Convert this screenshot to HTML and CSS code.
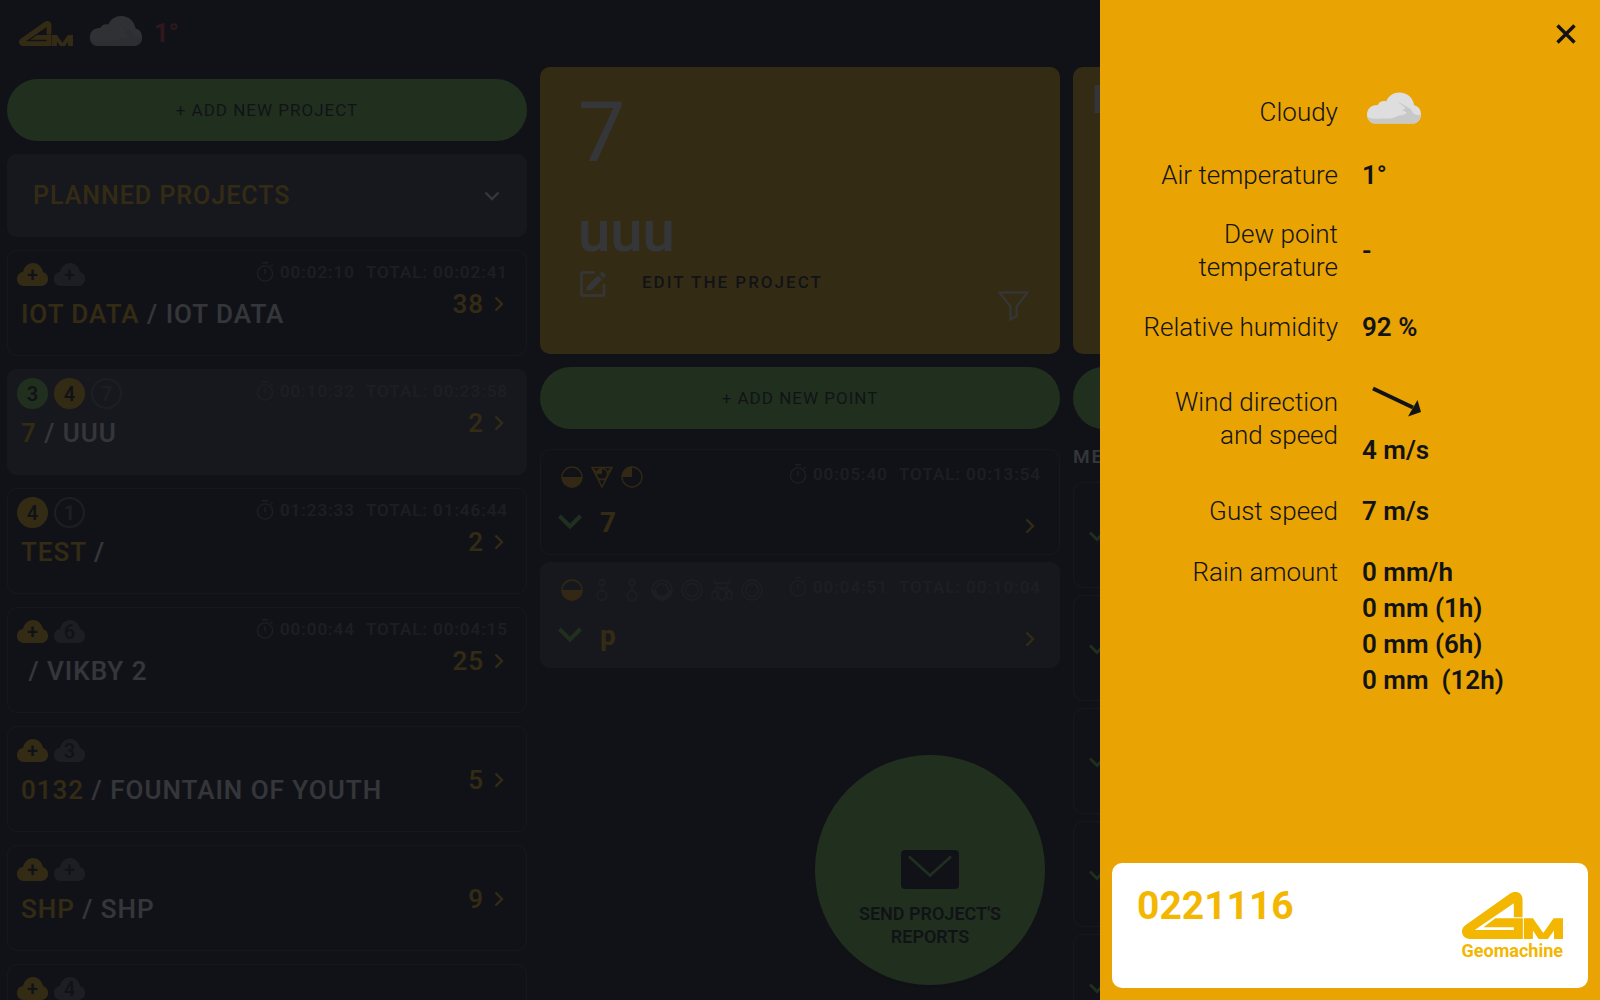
FILE: index.html
```html
<!DOCTYPE html>
<html lang="en">
<head>
    <meta charset="UTF-8">
    <meta name="viewport" content="width=device-width, initial-scale=1.0">
    <title>Geomachine</title>
    <link rel="stylesheet" href="styles.css">
</head>
<body>
    <!-- Shared icons -->
    <svg class="sprite" aria-hidden="true">
        <symbol id="logo" viewBox="0 0 302 140">
            <path d="M155 75H181V23C181 7 171 0 160 0C153 0 148 2 143 5L12 98C4 104 0 110 0 118C0 131 10 140 24 140H182V78H100L64 105H155V113H38L155 33Z"/>
            <path d="M185 78H212L243 122L274 78H302V140H275V115L257 140H229L212 115V140H185Z"/>
        </symbol>
        <symbol id="weather" viewBox="0 0 160 92">
            <path fill="#dedede" d="M26 92C10 92 0 80 0 65C0 48 13 36 32 37C36 27 46 23 57 26C64 9 79 0 96 0C119 0 136 15 140 38C153 41 160 52 160 65C160 80 150 92 134 92Z"/>
            <path fill="#c8c8c8" d="M26 92C12 92 4 84 1 73C14 80 28 78 44 77C62 78 80 78 91 70C96 66 112 68 118 60C114 55 106 56 104 51C116 50 114 46 110 42C102 36 98 34 92 30C106 32 114 42 124 46C134 50 132 58 138 62C146 66 152 68 160 66C160 80 150 92 134 92Z"/>
        </symbol>
        <symbol id="badge-cloud" viewBox="0 0 31 23">
            <path d="M7 23C3 23 0 20 0 16C0 12 3 9 6 9C7 4 11 0 16 0C21 0 25 4 26 9C29 10 31 12 31 16C31 20 28 23 24 23Z"/>
        </symbol>
        <symbol id="timer" viewBox="0 0 18 20">
            <g fill="none" stroke="currentColor" stroke-width="1.4">
                <circle cx="9" cy="11.500" r="7.600"/>
                <path d="M6 .8H12M9 7V12M14.500 4.500L16.500 3"/>
            </g>
        </symbol>
        <symbol id="chevron-right" viewBox="0 0 10 16">
            <path d="M1.500 1.500L8 8L1.500 14.500" fill="none" stroke="currentColor" stroke-width="2.200"/>
        </symbol>
        <symbol id="check" viewBox="0 0 24 16">
            <path d="M1.500 2L12 12.500L22.500 2" fill="none" stroke="currentColor" stroke-width="4"/>
        </symbol>
        <symbol id="half" viewBox="0 0 22 22">
            <circle cx="11" cy="11" r="10" fill="none" stroke="currentColor" stroke-width="1.300"/>
            <path d="M.5 11H21.500A10.500 10.500 0 0 1 .5 11Z" fill="currentColor"/>
        </symbol>
        <symbol id="quarter" viewBox="0 0 22 22">
            <circle cx="11" cy="11" r="10" fill="none" stroke="currentColor" stroke-width="1.300"/>
            <path d="M11 .5V11H.5A10.500 10.500 0 0 1 11 .5Z" fill="currentColor"/>
        </symbol>
        <symbol id="triangle" viewBox="0 0 22 22">
            <path d="M1 1.500H21L11 21ZM7 13.500H15M1 1.500L6 7M21 1.500L16 7" fill="none" stroke="currentColor" stroke-width="1.500"/>
            <circle cx="11" cy="8" r="5.500" fill="none" stroke="currentColor" stroke-width="1.300"/>
            <path d="M11 2V8H5A6 6 0 0 1 11 2Z" fill="currentColor"/>
        </symbol>
        <symbol id="chain" viewBox="0 0 22 22">
            <g fill="none" stroke="currentColor" stroke-width="1.400">
                <circle cx="11" cy="3.500" r="2.800"/>
                <circle cx="11" cy="16.500" r="4.800"/>
                <path d="M11 6.500V11.500"/>
            </g>
        </symbol>
        <symbol id="ring" viewBox="0 0 22 22">
            <g fill="none" stroke="currentColor" stroke-width="1.400">
                <circle cx="11" cy="11" r="10"/>
                <circle cx="11" cy="11" r="6.500"/>
            </g>
        </symbol>
        <symbol id="ring-half" viewBox="0 0 22 22">
            <g fill="none" stroke="currentColor" stroke-width="1.400">
                <circle cx="11" cy="11" r="10"/>
                <circle cx="11" cy="11" r="6.500"/>
                <path d="M2.700 11A8.300 8.300 0 0 0 19.300 11" stroke-width="4"/>
            </g>
        </symbol>
        <symbol id="machine" viewBox="0 0 22 22">
            <g fill="none" stroke="currentColor" stroke-width="1.400">
                <path d="M3.500 0V4H18.500V0M6 4V9H16V4M6 9L2 14M16 9L20 14"/>
                <rect x="7.500" y="10" width="7" height="11" rx="3.500"/>
                <rect x="1" y="12" width="5" height="8" rx="2"/>
                <rect x="16" y="12" width="5" height="8" rx="2"/>
            </g>
        </symbol>
    </svg>

    <header class="topbar">
        <svg class="topbar-logo"><use href="#logo"/></svg>
        <svg class="topbar-weather"><use href="#weather"/></svg>
        <span class="topbar-temp">1°</span>
    </header>

    <main class="columns">
        <section class="column projects">
            <button class="add-button" type="button">+ Add new project</button>
            <div class="filter-box">
                <select class="filter-select" aria-label="Project filter">
                    <option>PLANNED PROJECTS</option>
                </select>
                <svg class="filter-arrow" viewBox="0 0 16 10"><path d="M1.500 1.500L8 8L14.500 1.500" fill="none" stroke="currentColor" stroke-width="2.400"/></svg>
            </div>
            <a class="project" href="#">
                <div class="project-info">
                    <div class="badges">
                        <span class="badge cloud yellow"><svg><use href="#badge-cloud"/></svg><b>+</b></span>
                        <span class="badge cloud grey"><svg><use href="#badge-cloud"/></svg><b>+</b></span>
                    </div>
                    <div class="project-title"><span>IOT DATA</span> / IOT DATA</div>
                </div>
                <div class="project-side">
                    <div class="times"><svg><use href="#timer"/></svg><span>00:02:10</span><span>TOTAL: 00:02:41</span></div>
                    <div class="count">38 <svg><use href="#chevron-right"/></svg></div>
                </div>
            </a>
            <a class="project active" href="#">
                <div class="project-info">
                    <div class="badges">
                        <span class="badge green"><b>3</b></span>
                        <span class="badge yellow"><b>4</b></span>
                        <span class="badge outline"><b>7</b></span>
                    </div>
                    <div class="project-title"><span>7</span> / UUU</div>
                </div>
                <div class="project-side">
                    <div class="times"><svg><use href="#timer"/></svg><span>00:10:32</span><span>TOTAL: 00:23:58</span></div>
                    <div class="count">2 <svg><use href="#chevron-right"/></svg></div>
                </div>
            </a>
            <a class="project" href="#">
                <div class="project-info">
                    <div class="badges">
                        <span class="badge yellow"><b>4</b></span>
                        <span class="badge outline"><b>1</b></span>
                    </div>
                    <div class="project-title"><span>TEST</span> /</div>
                </div>
                <div class="project-side">
                    <div class="times"><svg><use href="#timer"/></svg><span>01:23:33</span><span>TOTAL: 01:46:44</span></div>
                    <div class="count">2 <svg><use href="#chevron-right"/></svg></div>
                </div>
            </a>
            <a class="project" href="#">
                <div class="project-info">
                    <div class="badges">
                        <span class="badge cloud yellow"><svg><use href="#badge-cloud"/></svg><b>+</b></span>
                        <span class="badge cloud grey"><svg><use href="#badge-cloud"/></svg><b>6</b></span>
                    </div>
                    <div class="project-title">&nbsp;/ VIKBY 2</div>
                </div>
                <div class="project-side">
                    <div class="times"><svg><use href="#timer"/></svg><span>00:00:44</span><span>TOTAL: 00:04:15</span></div>
                    <div class="count">25 <svg><use href="#chevron-right"/></svg></div>
                </div>
            </a>
            <a class="project" href="#">
                <div class="project-info">
                    <div class="badges">
                        <span class="badge cloud yellow"><svg><use href="#badge-cloud"/></svg><b>+</b></span>
                        <span class="badge cloud grey"><svg><use href="#badge-cloud"/></svg><b>3</b></span>
                    </div>
                    <div class="project-title"><span>0132</span> / FOUNTAIN OF YOUTH</div>
                </div>
                <div class="project-side no-times">
                    <div class="count">5 <svg><use href="#chevron-right"/></svg></div>
                </div>
            </a>
            <a class="project" href="#">
                <div class="project-info">
                    <div class="badges">
                        <span class="badge cloud yellow"><svg><use href="#badge-cloud"/></svg><b>+</b></span>
                        <span class="badge cloud grey"><svg><use href="#badge-cloud"/></svg><b>+</b></span>
                    </div>
                    <div class="project-title"><span>SHP</span> / SHP</div>
                </div>
                <div class="project-side no-times">
                    <div class="count">9 <svg><use href="#chevron-right"/></svg></div>
                </div>
            </a>
            <a class="project" href="#">
                <div class="project-info">
                    <div class="badges">
                        <span class="badge cloud yellow"><svg><use href="#badge-cloud"/></svg><b>+</b></span>
                        <span class="badge cloud grey"><svg><use href="#badge-cloud"/></svg><b>4</b></span>
                    </div>
                </div>
            </a>
        </section>

        <section class="column points">
            <div class="hero">
                <h1 class="hero-number">7</h1>
                <h2 class="hero-name">uuu</h2>
                <div class="hero-actions">
                    <button class="edit-button" type="button">
                        <svg viewBox="0 0 26 26"><path d="M15 1.500H2.500A1 1 0 0 0 1.500 2.500V23.500A1 1 0 0 0 2.500 24.500H23A1 1 0 0 0 24 23.500V13" fill="none" stroke="currentColor" stroke-width="2.400"/><path d="M18 4.500L22 8.500L11.500 19L6.500 19.500L7 15.500ZM19.500 3L22 .5L26 4.500L23.500 7Z" fill="currentColor"/></svg>
                        <span>Edit the project</span>
                    </button>
                    <button class="funnel-button" type="button" aria-label="Filter">
                        <svg viewBox="0 0 31 30"><path d="M1.500 1.500H29.500L18.500 15.500V25L12.500 28.500V15.500Z" fill="none" stroke="currentColor" stroke-width="2"/></svg>
                    </button>
                </div>
            </div>
            <button class="add-button" type="button">+ Add new point</button>
            <div class="point-list">
                <a class="point" href="#">
                    <div class="point-top">
                        <div class="point-icons yellow-icons">
                            <svg><use href="#half"/></svg>
                            <svg><use href="#triangle"/></svg>
                            <svg><use href="#quarter"/></svg>
                        </div>
                        <div class="times"><svg><use href="#timer"/></svg><span>00:05:40</span><span>TOTAL: 00:13:54</span></div>
                    </div>
                    <div class="point-bottom">
                        <svg class="check"><use href="#check"/></svg>
                        <span class="point-name">7</span>
                        <svg class="arrow"><use href="#chevron-right"/></svg>
                    </div>
                </a>
                <a class="point active" href="#">
                    <div class="point-top">
                        <div class="point-icons">
                            <svg class="started"><use href="#half"/></svg>
                            <svg><use href="#chain"/></svg>
                            <svg><use href="#chain"/></svg>
                            <svg><use href="#ring-half"/></svg>
                            <svg><use href="#ring"/></svg>
                            <svg><use href="#machine"/></svg>
                            <svg><use href="#ring"/></svg>
                        </div>
                        <div class="times"><svg><use href="#timer"/></svg><span>00:04:51</span><span>TOTAL: 00:10:04</span></div>
                    </div>
                    <div class="point-bottom">
                        <svg class="check"><use href="#check"/></svg>
                        <span class="point-name">p</span>
                        <svg class="arrow"><use href="#chevron-right"/></svg>
                    </div>
                </a>
            </div>
            <button class="send-button" type="button">
                <svg viewBox="0 0 58 39"><rect width="58" height="39" rx="4" fill="#121317"/><path d="M8 6.500L29 25.500L50 6.500" fill="none" stroke="#72d148" stroke-width="2.600"/></svg>
                Send project's<br>reports
            </button>
        </section>

        <section class="column methods">
            <div class="hero"><h2 class="hero-point">p</h2></div>
            <button class="add-button" type="button" aria-label="Add"></button>
            <h3 class="methods-title">METHODS</h3>
            <div class="point-list">
                <div class="method"><svg><use href="#check"/></svg></div>
                <div class="method"><svg><use href="#check"/></svg></div>
                <div class="method"><svg><use href="#check"/></svg></div>
                <div class="method"><svg><use href="#check"/></svg></div>
                <div class="method"><svg><use href="#check"/></svg></div>
            </div>
        </section>
    </main>

    <div class="overlay"></div>

    <aside class="drawer">
        <button class="close-button" type="button" aria-label="Close">
            <svg viewBox="0 0 20 20"><path d="M1.500 1.500L18.500 18.500M18.500 1.500L1.500 18.500" stroke="currentColor" stroke-width="3.400"/></svg>
        </button>
        <dl class="weather-list">
            <div class="weather-row">
                <dt>Cloudy</dt>
                <dd><svg class="weather-icon"><use href="#weather"/></svg></dd>
            </div>
            <div class="weather-row">
                <dt>Air temperature</dt>
                <dd>1°</dd>
            </div>
            <div class="weather-row">
                <dt>Dew point temperature</dt>
                <dd>-</dd>
            </div>
            <div class="weather-row">
                <dt>Relative humidity</dt>
                <dd>92 %</dd>
            </div>
            <div class="weather-row">
                <dt>Wind direction and speed</dt>
                <dd>
                    <svg class="wind-arrow" viewBox="0 0 70 62"><path d="M11 18.500L51 37.500" stroke="currentColor" stroke-width="4"/><path d="M55.500 30L59 42L46 46.500Z" fill="currentColor"/></svg>
                    4 m/s
                </dd>
            </div>
            <div class="weather-row">
                <dt>Gust speed</dt>
                <dd>7 m/s</dd>
            </div>
            <div class="weather-row top">
                <dt>Rain amount</dt>
                <dd>0 mm/h<br>0 mm (1h)<br>0 mm (6h)<br>0 mm &nbsp;(12h)</dd>
            </div>
        </dl>
        <footer class="machine-card">
            <strong class="machine-number">0221116</strong>
            <div class="brand">
                <svg><use href="#logo"/></svg>
                <span>Geomachine</span>
            </div>
        </footer>
    </aside>
</body>
</html>
```
FILE: styles.css
```css
* {
    box-sizing: border-box;
}
body {
    font-family: Roboto, "Liberation Sans", sans-serif;
    background: #121317;
    color: #fff;
    margin: 0;
    height: 100vh;
    overflow: hidden;
}
h1, h2, h3, dl, dd {
    margin: 0;
}
button {
    font-family: inherit;
    border: none;
    padding: 0;
    cursor: pointer;
}
a {
    color: inherit;
    text-decoration: none;
}
svg {
    display: block;
    flex: none;
    fill: currentColor;
}
.sprite {
    position: absolute;
    width: 0;
    height: 0;
}

/* Top bar */
.topbar {
    display: flex;
    align-items: flex-end;
    height: 67px;
    padding: 0 19px 21px;
}
.topbar-logo {
    width: 54px;
    height: 25px;
    color: #f3b701;
}
.topbar-weather {
    width: 54px;
    height: 30px;
    margin: 0 11px 0 16px;
}
.topbar-temp {
    color: #e53935;
    font-size: 26px;
    line-height: 26px;
    font-weight: 600;
}

/* Columns */
.columns {
    display: flex;
    gap: 13px;
    padding: 0 7px;
    height: calc(100vh - 67px);
    overflow: hidden;
}
.column {
    position: relative;
    flex: none;
    width: 32.5vw;
}
.add-button {
    display: block;
    width: 100%;
    height: 62px;
    border-radius: 31px;
    background: #72d148;
    color: #121317;
    font-size: 17px;
    font-weight: 400;
    letter-spacing: 1px;
    text-transform: uppercase;
}
.projects {
    display: flex;
    flex-direction: column;
    gap: 13px;
    padding-top: 12px;
}
.projects .add-button,
.filter-box,
.project {
    flex: none;
}
.filter-box {
    display: flex;
    align-items: center;
    height: 83px;
    padding: 0 27px 0 26px;
    border-radius: 10px;
    background: #34383f;
}
.filter-select {
    flex: 1;
    appearance: none;
    border: none;
    padding: 0;
    background: none;
    color: #f3b701;
    font-family: inherit;
    font-size: 25px;
    font-weight: 500;
    letter-spacing: 1px;
}
.filter-arrow {
    width: 16px;
    height: 10px;
    fill: none;
}

/* Project cards */
.project {
    display: flex;
    height: 106px;
    padding: 8px 8px 8px 9px;
    border: 1px solid #34363c;
    border-radius: 10px;
    white-space: nowrap;
}
.project.active,
.point.active {
    background: #34383f;
    border-color: #34383f;
}
/* Long titles may run under the times, so they take no part in the row width */
.project-info {
    flex: 1;
    min-width: 0;
}
.badges {
    display: flex;
    gap: 6px;
}
.badge {
    display: grid;
    place-items: center;
    width: 31px;
    height: 31px;
    border-radius: 50%;
}
.badge > * {
    grid-area: 1 / 1;
}
.badge svg {
    width: 31px;
    height: 23px;
}
.badge b {
    color: #121317;
    font-size: 20px;
    line-height: 24px;
    font-weight: 600;
}
.badge.green {
    background: #72d148;
}
.badge.yellow {
    background: #f3b701;
}
.badge.cloud {
    background: none;
}
.badge.cloud.yellow {
    color: #f3b701;
}
.badge.cloud.grey {
    color: #5f6168;
}
.badge.outline {
    border: 2px solid #5f6168;
}
.badge.outline b {
    color: #5f6168;
}
.project-title {
    margin-top: 7px;
    padding: 0 4px;
    font-size: 26px;
    line-height: 34px;
    font-weight: 500;
    letter-spacing: 1px;
}
.project-title span {
    color: #f3b701;
}
.times {
    display: flex;
    align-items: center;
    height: 26px;
    color: #5f6168;
    font-size: 17px;
    font-weight: 500;
    letter-spacing: 1px;
    white-space: nowrap;
}
.times svg {
    width: 18px;
    height: 20px;
    margin-right: 6px;
    fill: none;
}
.times span + span {
    margin-left: 11px;
}
.project-side {
    padding-right: 10px;
}
.count {
    display: flex;
    align-items: center;
    justify-content: flex-end;
    gap: 10px;
    height: 38px;
    padding-right: 4px;
    color: #f3b701;
    font-size: 26px;
    font-weight: 500;
    letter-spacing: 1px;
}
.no-times .count {
    margin-top: 26px;
}
.count svg,
.arrow {
    width: 10px;
    height: 16px;
    fill: none;
}

/* Selected project */
.hero {
    display: flex;
    flex-direction: column;
    height: 287px;
    margin-bottom: 13px;
    padding: 16px 31px 32px 38px;
    border-radius: 10px;
    background: #f3b701;
    color: #fff;
}
.hero-number {
    font-size: 84px;
    line-height: 100px;
    font-weight: 400;
}
.hero-name {
    font-size: 58px;
    line-height: 80px;
    font-weight: 500;
    margin-top: 8px;
}
.hero-actions {
    display: flex;
    justify-content: space-between;
    align-items: flex-start;
}
.edit-button {
    display: flex;
    gap: 36px;
    margin-left: 2px;
    background: none;
    color: #121317;
    font-size: 17px;
    line-height: 22px;
    font-weight: 500;
    letter-spacing: 2px;
    text-transform: uppercase;
}
.edit-button svg {
    width: 26px;
    height: 26px;
    color: #fff;
}
.funnel-button {
    margin-top: 20px;
    background: none;
    color: #fff;
}
.funnel-button svg {
    width: 31px;
    height: 30px;
}

/* Points */
.point-list {
    display: flex;
    flex-direction: column;
    gap: 7px;
}
.points .point-list {
    margin-top: 20px;
}
.point {
    height: 106px;
    padding: 11px 18px 0 17px;
    border: 1px solid #34363c;
    border-radius: 10px;
}
.point-top {
    display: flex;
    justify-content: space-between;
    padding-left: 3px;
}
.point-icons {
    display: flex;
    align-items: center;
    gap: 8px;
    height: 31px;
    color: #5f6168;
}
.point-icons svg {
    width: 22px;
    height: 22px;
    fill: none;
}
.yellow-icons,
.point-icons .started {
    color: #e8a003;
}
.point-bottom {
    display: flex;
    align-items: center;
    height: 60px;
    padding-right: 6px;
}
.check {
    width: 24px;
    height: 16px;
    color: #72d148;
    fill: none;
}
.point-name {
    flex: 1;
    padding-left: 18px;
    color: #f3b701;
    font-size: 28px;
    font-weight: 700;
}
.arrow {
    margin-top: 7px;
    color: #f3b701;
}
.send-button {
    position: absolute;
    right: 15px;
    bottom: 15px;
    display: flex;
    flex-direction: column;
    align-items: center;
    width: 230px;
    height: 230px;
    padding-top: 95px;
    border-radius: 50%;
    background: #72d148;
    box-shadow: 0 6px 12px rgba(0, 0, 0, 0.4);
    color: #121317;
    font-size: 18px;
    line-height: 23px;
    font-weight: 600;
    text-transform: uppercase;
}
.send-button svg {
    width: 58px;
    height: 39px;
    margin-bottom: 13px;
}

/* Methods */
.methods .hero {
    padding: 0 20px;
}
.hero-point {
    font-size: 36px;
    line-height: 52px;
    font-weight: 700;
}
.methods-title {
    padding: 16px 0 13px;
    font-size: 19px;
    line-height: 24px;
    font-weight: 500;
    letter-spacing: 2px;
}
.method {
    height: 106px;
    padding: 48px 15px 0;
    border: 1px solid #34363c;
    border-radius: 10px;
    color: #72d148;
}
.method svg {
    width: 16px;
    height: 11px;
    fill: none;
}

/* Weather drawer */
.overlay {
    position: fixed;
    inset: 0;
    background: rgba(18, 19, 23, 0.85);
}
.drawer {
    position: fixed;
    top: 0;
    right: 0;
    bottom: 0;
    display: flex;
    flex-direction: column;
    width: 31.25vw;
    min-width: 440px;
    padding: 12px;
    background: #e9a303;
    color: #121317;
}
.close-button {
    align-self: flex-end;
    padding: 12px;
    background: none;
    color: #121317;
}
.close-button svg {
    width: 20px;
    height: 20px;
}
.weather-list {
    display: flex;
    flex-direction: column;
    gap: 25px;
    flex: 1;
    padding-top: 36px;
    font-size: 26px;
}
.weather-row {
    display: grid;
    grid-template-columns: 1fr 1fr;
    gap: 24px;
    align-items: center;
}
.weather-row.top {
    align-items: baseline;
}
.weather-row dt {
    padding-left: 24px;
    text-align: right;
    line-height: 33px;
    font-weight: 300;
}
.weather-row dd {
    line-height: 36px;
    font-weight: 600;
}
.weather-icon {
    width: 54px;
    height: 32px;
    margin: 0 5px 8px;
}
.wind-arrow {
    width: 70px;
    height: 62px;
}

/* Machine info */
.machine-card {
    display: flex;
    justify-content: space-between;
    height: 125px;
    padding: 20px 25px;
    border-radius: 10px;
    background: #fff;
    color: #f3b701;
}
.machine-number {
    font-size: 39px;
    line-height: 46px;
    font-weight: 700;
}
.brand {
    display: flex;
    flex-direction: column;
    align-items: center;
    padding-top: 9px;
}
.brand svg {
    width: 101px;
    height: 47px;
}
.brand span {
    font-size: 18px;
    line-height: 24px;
    font-weight: 700;
}
```
